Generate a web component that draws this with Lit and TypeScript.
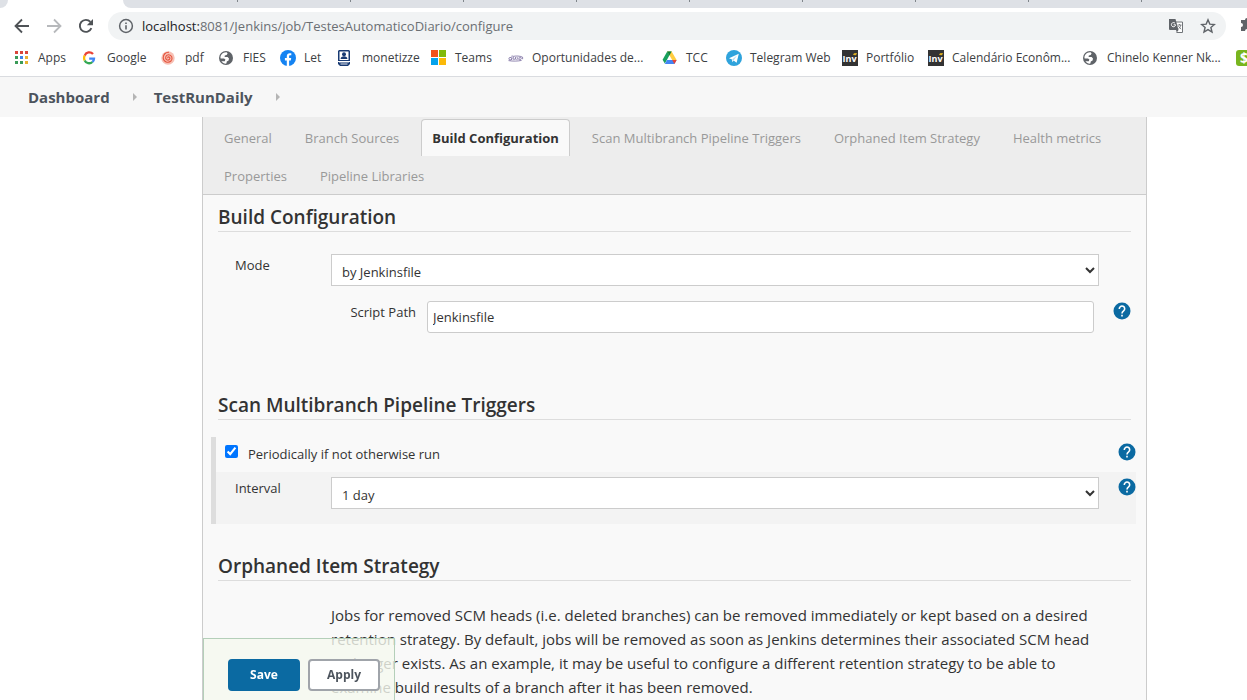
import { LitElement, html, css, svg } from "lit";
import { customElement, state } from "lit/decorators.js";

const globe = svg`<circle cx="7" cy="8" r="7" fill="#5f6368"/><path d="M2 5.2C3 3.2 5 2.2 7.6 2.3L8.6 3.6 7.6 5 5.8 5.4 5.6 7H8.6L10 8.6 9.6 10.6 7.8 11.4 7.4 13.6C5.4 13.9 3.6 12.9 2.4 11.2H5.8L6.4 9.6 5 8.4H1.6C1.3 7.2 1.5 6.2 2 5.2Z" fill="#fff"/>`;
const inv = svg`<rect width="16" height="16" fill="#333"/><text x="0.5" y="12" font-size="9" font-weight="700" font-family="Open Sans, sans-serif" fill="#fff">Inv</text><path d="M11 5L12 3.2 15 3 14 5.2Z" fill="#e0b020"/>`;

const icons: Record<string, unknown> = {
  apps: svg`<g fill="#d9453a"><path d="M1 1h3v3H1zM6 1h3v3H6zM11 1h3v3h-3z"/></g><path fill="#3a9b58" d="M1 6h3v3H1zM1 11h3v3H1z"/><path fill="#3f82e8" d="M6 6h3v3H6z"/><path fill="#e8b030" d="M11 6h3v3h-3zM11 11h3v3h-3z"/><path fill="#3a9b58" d="M6 11h3v3H6z"/>`,
  google: svg`<g fill="none" stroke-width="2.3"><path d="M10 4A4.9 4.9 0 0 0 1.7 5.6" stroke="#ea4335"/><path d="M1.7 5.6A5 5 0 0 0 1.7 10.4" stroke="#fbbc05"/><path d="M1.7 10.4A4.9 4.9 0 0 0 9.4 12" stroke="#34a853"/><path d="M9.4 12A4.7 4.7 0 0 0 11 8.6H6.2" stroke="#4285f4"/></g>`,
  pdf: svg`<circle cx="7" cy="8" r="6.7" fill="#f7c0b4"/><path d="M7 8.2C6.2 7.4 7.6 6.2 8.6 7.3C9.8 8.9 7.6 10.8 5.8 9.8C3.6 8.4 4.6 5 7.4 4.8C10.8 4.7 12.2 8.6 10 11C7.2 13.6 2.6 12 2.2 8C2 4.6 4.6 2 8 2.2" fill="none" stroke="#e5533d" stroke-width="1.1"/>`,
  globe,
  facebook: svg`<circle cx="8" cy="8" r="8" fill="#1483f2"/><path d="M6.8 16V10.4H4.9V8H6.8V6.2C6.8 4.2 8 3.2 9.7 3.2L11.3 3.3V5.3H10.2C9.3 5.3 9.1 5.8 9.1 6.4V8H11.2L10.8 10.4H9.1V16Z" fill="#fff"/>`,
  monetizze: svg`<path d="M1 0h10l1 1v10H0V1zM0 12h12v2l-2 2H2l-2-2z" fill="#183a73"/><rect x="1.5" y="1.5" width="9" height="8.5" fill="#fff"/><circle cx="6" cy="4.2" r="2" fill="#183a73"/><path d="M2.6 9C2.6 7 4 6.2 6 6.2S9.4 7 9.4 9Z" fill="#183a73"/><path d="M1 12h10M2.5 14h7" stroke="#fff" stroke-width=".9"/>`,
  teams: svg`<path fill="#f1511b" d="M0 0h7v7H0z"/><path fill="#80b90a" d="M8 0h7v7H8z"/><path fill="#05a3ec" d="M0 8h7v7H0z"/><path fill="#fbb908" d="M8 8h7v7H8z"/>`,
  script: svg`<path d="M4.2 5.4L3.6 10M3.6 8.4C3 6.8 .8 7.2 .9 8.8S3.2 10.4 3.8 8.8M5.6 7.2C5 9.2 5.4 10 6.4 9.4S7.6 7.6 7.8 7.2C7.4 9.2 7.6 10 8.6 9.4M9.8 7.2C9.4 9.2 9.6 9.8 10.4 9.4M11 9C11 7 13 6.8 13.2 8.2S11.4 10.4 11 9M.5 10.6C5 11.4 10 11.2 13.6 10.4M5 6.4C8 5.8 12 5.8 14.6 7.2V9.2" stroke="#63538f" stroke-width=".7" fill="none"/>`,
  drive: svg`<path d="M5.2 1.6H9.6L5 9.8 2.8 13.6 .6 9.8Z" fill="#17a05d"/><path d="M5.2 1.6H9.6L14.6 10H10.2Z" fill="#ffcd40"/><path d="M5 10H14.6L12.4 14H2.8Z" fill="#4285f4"/><path d="M5.2 1.6H9.6L7.4 5.5Z" fill="#0c8043"/><path d="M10.2 10H14.6L12.4 14Z" fill="#ea4335"/>`,
  telegram: svg`<circle cx="8" cy="8" r="8" fill="#2fa3dc"/><path d="M3 8.2L12.8 3.8 10.6 12.8 7.6 10.6 6.4 12.2 6 9.4Z" fill="#fff"/><path d="M6 9.4L11 5.4 7.6 10.6" fill="#b9dff2"/>`,
  inv,
  dollar: svg`<rect width="16" height="16" rx="3" fill="#78b51e"/><text x="4" y="13" font-size="14" font-weight="700" font-family="Open Sans, sans-serif" fill="#fff">$</text>`,
};

const bookmarks: [string, string][] = [
  ["apps", "Apps"],
  ["google", "Google"],
  ["pdf", "pdf"],
  ["globe", "FIES"],
  ["facebook", "Let"],
  ["monetizze", "monetizze"],
  ["teams", "Teams"],
  ["script", "Oportunidades de..."],
  ["drive", "TCC"],
  ["telegram", "Telegram Web"],
  ["inv", "Portfólio"],
  ["inv", "Calendário Econôm..."],
  ["globe", "Chinelo Kenner Nk..."],
  ["dollar", ""],
];

const tabs = [
  "General",
  "Branch Sources",
  "Build Configuration",
  "Scan Multibranch Pipeline Triggers",
  "Orphaned Item Strategy",
  "Health metrics",
  "Properties",
  "Pipeline Libraries",
];

@customElement("browser-chrome")
class BrowserChrome extends LitElement {
  static styles = css`
    :host { display: block; font-family: "Open Sans", "Noto Sans", sans-serif; background: #fff; }
    .strip { display: flex; height: 8px; background: #fff; }
    .edge { width: 8px; background: #dee1e6; border-bottom-right-radius: 8px; }
    .current { width: 115px; }
    .others { flex: 1; display: flex; padding-left: 2px; background: #dee1e6; border-bottom-left-radius: 8px; overflow: hidden; }
    .others span { box-sizing: border-box; flex: 0 0 113px; height: 2px; border-right: 1px solid #80868b; }
    .toolbar { display: flex; align-items: center; height: 36px; padding-left: 14px; overflow: hidden; }
    .nav { display: flex; gap: 16px; margin-right: 14px; }
    button { display: block; border: 0; padding: 0; background: none; line-height: 0; }
    .address { flex: 1; min-width: 0; display: flex; align-items: center; height: 28px; box-sizing: border-box; border-radius: 14px; background: #f1f3f4; padding: 0 10px; gap: 8px; }
    .address svg { flex: none; }
    .actions { display: flex; gap: 16px; }
    .url { flex: 1; min-width: 0; font-size: 13px; color: #6b6f73; white-space: nowrap; overflow: hidden; }
    .url b { font-weight: 400; color: #202124; }
    .ext { flex: 0 0 21px; padding-left: 14px; box-sizing: border-box; overflow: hidden; }
    .bookmarks { display: grid; grid-template-columns: 69px 78px 58px 61px 58px 93px 77px 154px 64px 116px 86px 155px 153px 16px; align-items: center; height: 32px; padding: 0 0 4px 14px; box-sizing: border-box; overflow: hidden; }
    .bookmarks a { display: flex; align-items: center; gap: 8px; font-size: 12px; line-height: 16px; color: #3c4043; text-decoration: none; white-space: nowrap; }
    .bookmarks svg { flex: none; }
    .line { height: 1px; background: #dadce0; }
  `;

  render() {
    return html`
      <div class="strip"><div class="edge"></div><div class="current"></div>
        <div class="others">${Array.from({ length: 9 }, () => html`<span></span>`)}</div>
      </div>
      <div class="toolbar">
        <div class="nav">
          <button aria-label="Back"><svg width="16" height="16" viewBox="0 0 16 16"><path d="M15 8H2M8 1.5L1.5 8 8 14.5" fill="none" stroke="#4f5357" stroke-width="1.8"/></svg></button>
          <button aria-label="Forward"><svg width="16" height="16" viewBox="0 0 16 16"><path d="M1 8H14M8 1.5L14.5 8 8 14.5" fill="none" stroke="#b7b9bc" stroke-width="1.8"/></svg></button>
          <button aria-label="Reload"><svg width="16" height="16" viewBox="0 0 16 16"><path d="M13.4 10.2A6 6 0 1 1 12.4 3.9" fill="none" stroke="#4f5357" stroke-width="1.9"/><path d="M15 1V7.2H8.8Z" fill="#4f5357"/></svg></button>
        </div>
        <div class="address">
          <svg width="16" height="16" viewBox="0 0 16 16"><circle cx="8" cy="8" r="6.4" fill="none" stroke="#5f6368" stroke-width="1.5"/><path d="M8 7.2V11.6M8 4.4V6" stroke="#5f6368" stroke-width="1.6"/></svg>
          <span class="url"><b>localhost:</b>8081/Jenkins/job/TestesAutomaticoDiario/configure</span>
          <div class="actions">
            <svg width="16" height="16" viewBox="0 0 16 16"><path d="M6 4H14.5V14.5H8.5" fill="#fff" stroke="#707478" stroke-width="1"/><path d="M1 1H7.5L10.5 12H2A1 1 0 0 1 1 11Z" fill="#5f6368"/><path d="M8 12H10.5L8.8 14.6Z" fill="#5f6368"/><path d="M7 5.2A2.1 2.1 0 1 0 7.6 6.8H5.6" fill="none" stroke="#fff" stroke-width="1"/><path d="M9.5 7H13.5M11.5 6V7M12.8 7C12.5 9 11.5 10 10.5 10.8M10.4 8.2L13 11.2" stroke="#707478" stroke-width=".9" fill="none"/></svg>
            <svg width="16" height="16" viewBox="0 0 16 16"><path d="M8 1.8L9.8 6.1 14.4 6.5 10.9 9.5 12 14 8 11.6 4 14 5.1 9.5 1.6 6.5 6.2 6.1Z" fill="none" stroke="#5f6368" stroke-width="1.4"/></svg>
          </div>
        </div>
        <div class="ext"><svg width="16" height="16" viewBox="0 0 16 16"><path d="M1 4H5A2 2 0 0 1 9 4H13V8A2 2 0 0 1 13 12V15H9A2 2 0 0 0 5 15H1V11A2 2 0 0 0 1 7Z" fill="#5f6368"/></svg></div>
      </div>
      <nav class="bookmarks" aria-label="Bookmarks">
        ${bookmarks.map(([icon, label]) => html`<a href="#"><svg width="16" height="16" viewBox="0 0 16 16">${icons[icon]}</svg>${label}</a>`)}
      </nav>
      <div class="line"></div>
    `;
  }
}

@customElement("help-button")
class HelpButton extends LitElement {
  static styles = css`
    :host { display: block; }
    button { display: block; border: 0; padding: 0; background: none; line-height: 0; }
  `;
  render() {
    return html`<button aria-label="Help"><svg width="18" height="18" viewBox="0 0 18 18"><circle cx="9" cy="9" r="8.5" fill="#0b6aa2"/><path d="M6.3 7A2.7 2.7 0 1 1 10.6 8.9C9.5 9.7 9 10.1 9 11.4" fill="none" stroke="#fff" stroke-width="1.6"/><path d="M8.2 12.7H9.8V14.4H8.2Z" fill="#fff"/></svg></button>`;
  }
}

@customElement("app-root")
class AppRoot extends LitElement {
  @state() active = 2;

  static styles = css`
    :host { display: flex; flex-direction: column; height: 100vh; overflow: hidden; background: #fff; color: #333; font: 13px/20px "Open Sans", "Noto Sans", sans-serif; }
    * { box-sizing: border-box; }
    .crumbs { flex: none; display: flex; align-items: center; height: 40px; padding-left: 28px; background: #f7f7f7; font-size: 15px; font-weight: 700; }
    .crumbs a { color: #4d545d; text-decoration: none; }
    .crumbs svg { margin: 0 16px 0 22px; }
    .panel { flex: 1; margin: 0 100px 0 202px; background: #f9f9f9; border: 1px solid #ccc; border-width: 0 1px; }
    .tabs { display: flex; flex-wrap: wrap; gap: 1px 11px; padding: 2px 10px 0; background: #ededed; border-bottom: 1px solid #ccc; }
    .tab { height: 37px; padding: 0 10px; border: 1px solid transparent; border-bottom: 0; border-radius: 4px 4px 0 0; background: none; font: inherit; color: #999; }
    .tab.on { border-color: #ccc; background: #f9f9f9; color: #333; font-weight: 700; }
    .section { padding: 0 15px; }
    h2 { margin: 0; padding-top: 8px; height: 37px; border-bottom: 1px solid #ddd; font-size: 19px; line-height: 28px; font-weight: 600; }
    .row { display: grid; grid-template-columns: 96px 1fr 32px; padding-left: 17px; }
    .row label { padding-top: 1px; }
    .mode { margin-top: 22px; }
    .path { display: grid; grid-template-columns: 96px 1fr 37px; padding-left: 113px; margin-top: 15px; }
    .path label { padding: 1px 11px 0 0; text-align: right; }
    select, .text { width: 100%; height: 32px; border: 1px solid #ccc; border-radius: 0; background-color: #fff; font: inherit; color: #333; }
    select { padding: 4px 0 0 6px; }
    .text { padding: 0 5px; border-radius: 3px; }
    .path help-button { justify-self: end; padding-top: 1px; }
    .triggers { margin-top: 50px; }
    .block { margin: 17px 10px 0 8px; border-left: 5px solid #ddd; }
    .check { display: flex; align-items: center; height: 35px; padding: 0 0 2px 9px; }
    .check input { margin: 0 10px 4px 0; width: 13px; height: 13px; }
    .check label { flex: 1; }
    .check help-button { padding-bottom: 4px; }
    .interval { display: grid; grid-template-columns: 96px 1fr 37px; height: 52px; padding: 5px 0 0 19px; background: #f3f3f3; }
    .interval label { padding-top: 1px; }
    .interval help-button { justify-self: end; padding-top: 1px; }
    .orphan { margin-top: 20px; }
    p { margin: 22px 32px 0 113px; font-size: 15px; line-height: 24px; }
    .bar { position: fixed; left: 203px; bottom: 0; display: flex; gap: 8px; height: 62px; padding: 20px 14px 0 24px; border: 1px solid #b4cfb9; border-bottom: 0; background: rgba(245, 249, 239, 0.8); }
    .bar button { width: 72px; height: 32px; border: 2px solid #a0a4aa; border-radius: 4px; background: #fff; font: 700 12px/16px "Open Sans", "Noto Sans", sans-serif; color: #4d545d; }
    .bar .save { border-color: #0b6aa2; background: #0b6aa2; color: #fff; }
  `;

  render() {
    const arrow = html`<svg width="6" height="8" viewBox="0 0 6 8"><path d="M1 0L5 4 1 8Z" fill="#b5b5b5"/></svg>`;
    return html`
      <browser-chrome></browser-chrome>
      <nav class="crumbs"><a href="#">Dashboard</a>${arrow}<a href="#">TestRunDaily</a>${arrow}</nav>
      <main class="panel">
        <div class="tabs" role="tablist">
          ${tabs.map((t, i) => html`<button role="tab" class="tab ${i === this.active ? "on" : ""}" @click=${() => (this.active = i)}>${t}</button>`)}
        </div>
        <section>
          <div class="section"><h2>Build Configuration</h2></div>
          <div class="section">
            <div class="row mode"><label for="mode">Mode</label><select id="mode"><option>by Jenkinsfile</option></select></div>
            <div class="path"><label for="path">Script Path</label><input class="text" id="path" type="text" value="Jenkinsfile"><help-button></help-button></div>
          </div>
        </section>
        <section class="triggers">
          <div class="section"><h2>Scan Multibranch Pipeline Triggers</h2></div>
          <div class="block">
            <div class="check"><input type="checkbox" id="periodic" checked><label for="periodic">Periodically if not otherwise run</label><help-button></help-button></div>
            <div class="interval"><label for="interval">Interval</label><select id="interval"><option>1 day</option></select><help-button></help-button></div>
          </div>
        </section>
        <section class="section orphan">
          <h2>Orphaned Item Strategy</h2>
          <p>Jobs for removed SCM heads (i.e. deleted branches) can be removed immediately or kept based on a desired retention strategy. By default, jobs will be removed as soon as Jenkins determines their associated SCM head no longer exists. As an example, it may be useful to configure a different retention strategy to be able to examine build results of a branch after it has been removed.</p>
        </section>
      </main>
      <div class="bar"><button class="save">Save</button><button>Apply</button></div>
    `;
  }
}
